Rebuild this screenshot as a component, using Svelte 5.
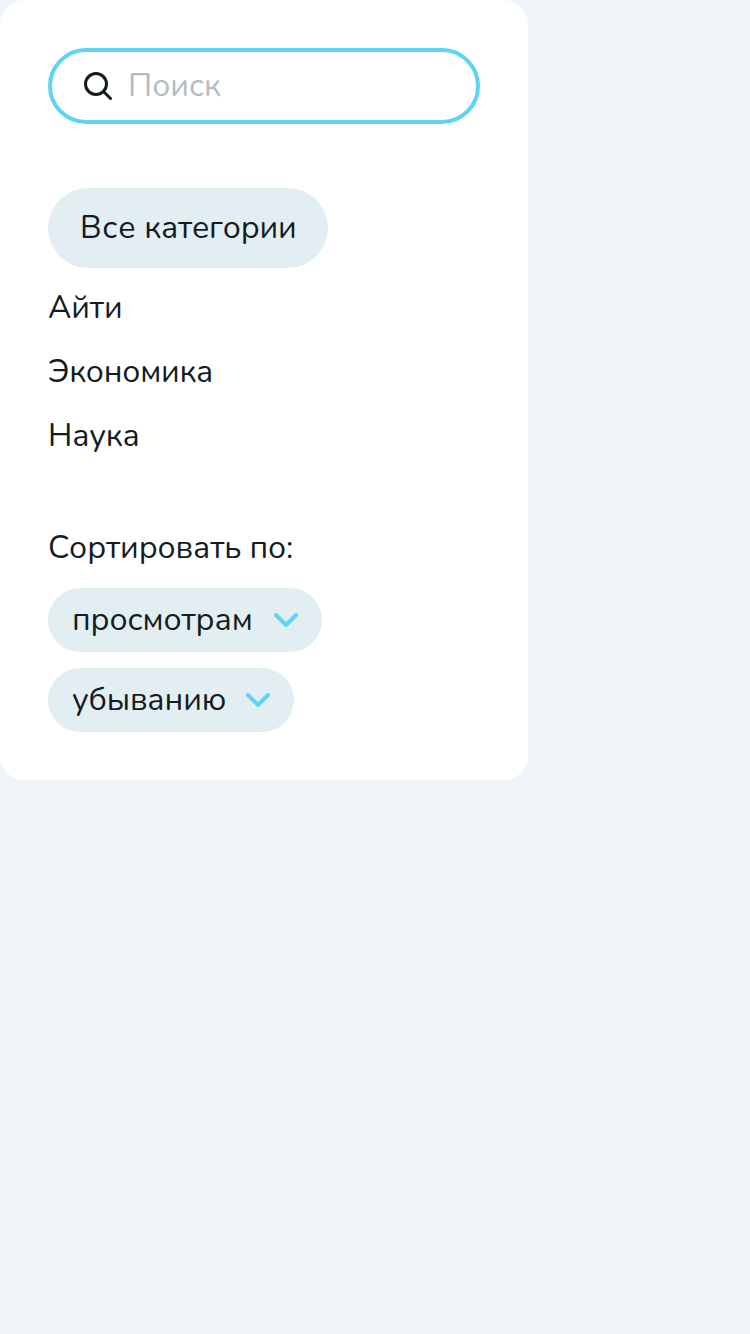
<script>
  const categories = [
    { name: 'Айти', tracking: -0.1 },
    { name: 'Экономика', tracking: -0.25 },
    { name: 'Наука', tracking: -0.2 }
  ];
  const sorts = [
    { name: 'просмотрам', width: 181 },
    { name: 'убыванию', width: 153 }
  ];
</script>

<aside class="panel">
  <label class="search">
    <svg class="glass" viewBox="0 0 28 28" width="28" height="28">
      <circle cx="12" cy="12" r="10.5" />
      <path d="M20 20L26.5 26.5" />
    </svg>
    <input type="text" placeholder="Поиск" />
  </label>

  <nav class="categories">
    <button class="all"><span class="lead">Все</span> категории</button>
    {#each categories as item}
      <button class="category" style="letter-spacing: {item.tracking}px">{item.name}</button>
    {/each}
  </nav>

  <section class="sorting">
    <h2>Сортировать по:</h2>
    {#each sorts as item}
      <button class="sort">
        <span style="width: {item.width}px">{item.name}</span>
        <svg class="chevron" viewBox="0 0 24 14" width="24" height="14">
          <path d="M2 2L12 12L22 2" />
        </svg>
      </button>
    {/each}
  </section>
</aside>

<style>
  :global(body) {
    margin: 0;
    background: #eef4f7;
  }
  .panel, button, input, h2 {
    font: 380 32px/48px Nunito, "Open Sans", sans-serif;
    color: #141c1f;
    letter-spacing: 0;
  }
  .panel {
    box-sizing: border-box;
    width: 528px;
    height: 780px;
    padding: 48px;
    border-radius: 24px;
    background: #fff;
  }
  button {
    border: 0;
    padding: 0;
    background: none;
    white-space: nowrap;
    text-align: left;
  }
  .search {
    display: flex;
    align-items: center;
    gap: 16px;
    box-sizing: border-box;
    height: 76px;
    padding: 0 32px;
    border: 4px solid #5ed4f5;
    border-radius: 38px;
  }
  svg {
    flex: none;
    fill: none;
    stroke-linecap: round;
    stroke-linejoin: round;
  }
  .glass {
    stroke: #141c1f;
    stroke-width: 3;
  }
  input {
    min-width: 0;
    flex: 1;
    padding: 0;
    border: 0;
    outline: 0;
    background: none;
  }
  input::placeholder {
    color: #b0bec2;
    opacity: 1;
  }
  .categories {
    display: flex;
    flex-direction: column;
    align-items: flex-start;
    gap: 16px;
    margin-top: 64px;
  }
  .all {
    width: 280px;
    height: 80px;
    padding: 0 32px;
    border-radius: 40px;
    background: #e2eef2;
    letter-spacing: -0.2px;
  }
  .lead {
    letter-spacing: 0.7px;
  }
  .sorting {
    display: flex;
    flex-direction: column;
    align-items: flex-start;
    gap: 16px;
    margin-top: 64px;
  }
  h2 {
    margin: 0;
    letter-spacing: -0.1px;
  }
  .sort {
    display: flex;
    align-items: center;
    gap: 21px;
    height: 64px;
    padding: 0 24px;
    border-radius: 32px;
    background: #e2eef2;
    letter-spacing: -0.1px;
  }
  .chevron {
    stroke: #5ed4f5;
    stroke-width: 4;
  }
</style>
